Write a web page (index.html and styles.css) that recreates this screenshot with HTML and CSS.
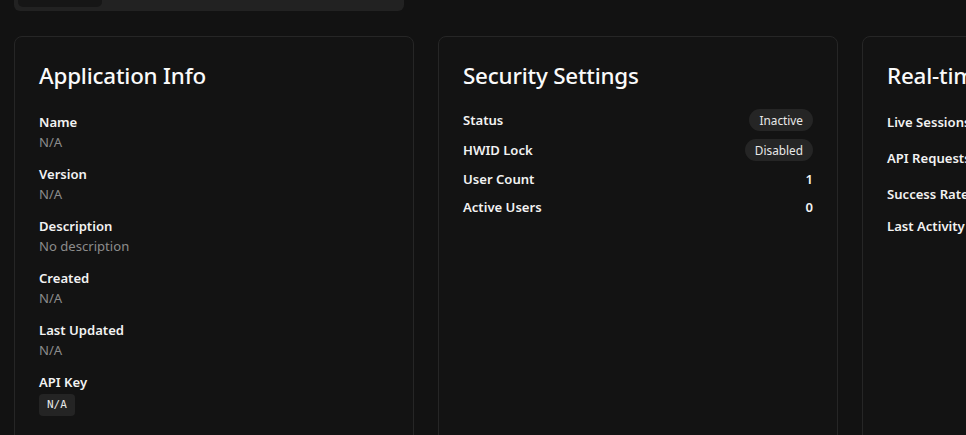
FILE: index.html
```html
<!DOCTYPE html>
<html>
<head>
<meta charset="utf-8">
<link rel="stylesheet" href="styles.css">
</head>
<body>
<div class="page">
  <div class="tabs"><div class="tab"></div></div>
  <div class="cards">
    <section class="card">
      <h2 class="card-title">Application Info</h2>
      <div class="fields">
        <div class="field"><div class="label">Name</div><div class="value">N/A</div></div>
        <div class="field"><div class="label">Version</div><div class="value">N/A</div></div>
        <div class="field"><div class="label">Description</div><div class="value">No description</div></div>
        <div class="field"><div class="label">Created</div><div class="value">N/A</div></div>
        <div class="field"><div class="label">Last Updated</div><div class="value">N/A</div></div>
        <div class="field"><div class="label">API Key</div><div class="value"><code class="key">N/A</code></div></div>
      </div>
    </section>
    <section class="card">
      <h2 class="card-title">Security Settings</h2>
      <div class="rows">
        <div class="row tall"><span class="label">Status</span><span class="badge">Inactive</span></div>
        <div class="row tall"><span class="label">HWID Lock</span><span class="badge">Disabled</span></div>
        <div class="row"><span class="label">User Count</span><span class="num">1</span></div>
        <div class="row"><span class="label">Active Users</span><span class="num">0</span></div>
      </div>
    </section>
    <section class="card">
      <h2 class="card-title">Real-time Statistics</h2>
      <div class="rows rt">
        <div class="row rt-row"><span class="label">Live Sessions</span><span class="num">0</span></div>
        <div class="row rt-row"><span class="label">API Requests</span><span class="num">0</span></div>
        <div class="row rt-row"><span class="label">Success Rate</span><span class="num">0%</span></div>
        <div class="row"><span class="label">Last Activity</span><span class="num">Never</span></div>
      </div>
    </section>
  </div>
</div>
</body>
</html>
```
FILE: styles.css
```css
html, body {
  margin: 0;
  padding: 0;
  background: #121212;
  overflow: hidden;
  height: 435px;
}
body {
  font-family: "Noto Sans", "Open Sans", sans-serif;
  color: #f2f2f2;
}
.page {
  padding: 0 14px;
  width: 1300px;
}
.tabs {
  width: 382px;
  height: 11px;
  background: #222222;
  border-radius: 0 0 6px 6px;
  padding: 0 4px;
  display: flex;
  align-items: flex-start;
}
.tab {
  width: 84px;
  height: 7px;
  background: #161616;
  border-radius: 0 0 5px 5px;
}
.cards {
  margin-top: 25px;
  display: grid;
  grid-template-columns: 400px 400px 400px;
  gap: 24px;
}
.card {
  box-sizing: border-box;
  height: 430px;
  background: #131313;
  border: 1px solid #262626;
  border-radius: 8px;
  padding: 24px;
}
.card-title {
  margin: 0 0 16px;
  font-size: 22.4px;
  line-height: 30px;
  font-weight: 500;
  color: #fafafa;
  letter-spacing: -0.2px;
}
.fields {
  display: flex;
  flex-direction: column;
  gap: 12px;
  padding-top: 5px;
}
.label {
  font-size: 13.1px;
  line-height: 20px;
  font-weight: 600;
  color: #f2f2f2;
}
.value {
  font-size: 13.1px;
  line-height: 20px;
  color: #8c8c8c;
}
.key {
  display: inline-block;
  margin-top: 2px;
  font-family: "DejaVu Sans Mono", "Liberation Mono", monospace;
  font-size: 11px;
  line-height: 22px;
  padding: 0 8px;
  background: #242424;
  border-radius: 4px;
  color: #e6e6e6;
}
.rows {
  display: flex;
  flex-direction: column;
  gap: 8px;
  padding-top: 2px;
}
.row {
  display: flex;
  justify-content: space-between;
  align-items: center;
  height: 20px;
}
.row.tall { height: 22px; }
.rows.rt { padding-top: 1px; }
.rt-row { height: 28px; }
.badge {
  font-size: 11.8px;
  line-height: 22px;
  padding: 0 10px;
  background: #252525;
  border-radius: 11px;
  color: #e8e8e8;
}
.num {
  font-size: 13.1px;
  font-weight: 600;
  color: #f2f2f2;
}
```
